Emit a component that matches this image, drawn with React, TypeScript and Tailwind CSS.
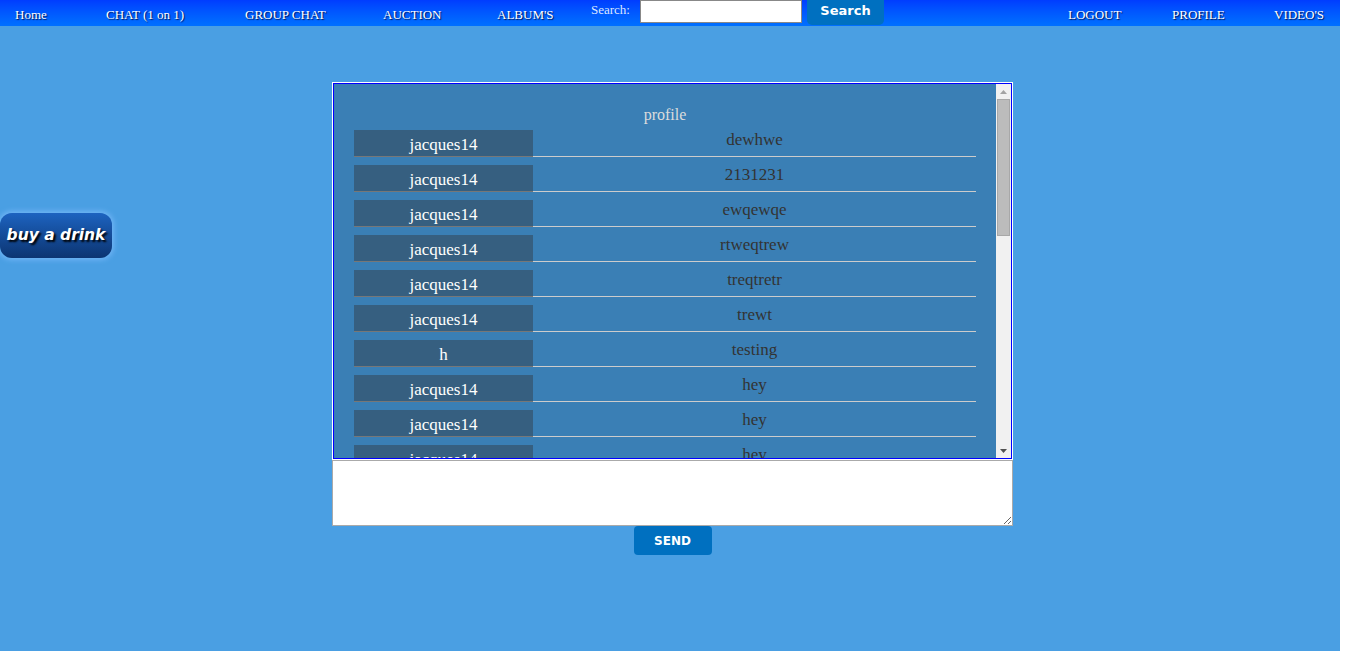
const navFont = { fontFamily: '"Liberation Serif", "DejaVu Serif", serif' };

const rows: [string, string][] = [
  ["jacques14", "dewhwe"],
  ["jacques14", "2131231"],
  ["jacques14", "ewqewqe"],
  ["jacques14", "rtweqtrew"],
  ["jacques14", "treqtretr"],
  ["jacques14", "trewt"],
  ["h", "testing"],
  ["jacques14", "hey"],
  ["jacques14", "hey"],
  ["jacques14", "hey"],
];

const NavLink = ({ label, w }: { label: string; w: string }) => (
  <a className={`${w} shrink-0 pt-[7px] text-[13px] leading-[16px] text-white [text-shadow:1px_1px_1px_#001a55]`}>{label}</a>
);

const ScrollBar = () => (
  <div className="flex w-[15px] shrink-0 flex-col items-center bg-[#f1f1f1]">
    <div className="flex h-[15px] w-full items-center justify-center">
      <svg width="7" height="4" viewBox="0 0 7 4">
        <path d="M0 4 L3.5 0 L7 4 Z" fill="#a3a3a3" />
      </svg>
    </div>
    <div className="h-[137px] w-[13px] border border-[#a8a8a8] bg-[#bcbcbc]" />
    <div className="flex-1" />
    <div className="flex h-[15px] w-full items-center justify-center">
      <svg width="7" height="4" viewBox="0 0 7 4">
        <path d="M0 0 L7 0 L3.5 4 Z" fill="#505050" />
      </svg>
    </div>
  </div>
);

const App = () => {
  return (
    <div className="flex min-h-[651px] w-[1354px] bg-white" style={navFont}>
      <div className="flex w-[1340px] flex-col bg-[#4a9fe3]">
        <div className="flex h-[26px] bg-gradient-to-b from-[#003cff] to-[#0070ff] pl-[15px]">
          <NavLink label="Home" w="w-[91px]" />
          <NavLink label="CHAT (1 on 1)" w="w-[139px]" />
          <NavLink label="GROUP CHAT" w="w-[138px]" />
          <NavLink label="AUCTION" w="w-[114px]" />
          <NavLink label="ALBUM'S" w="w-[94px]" />
          <span className="w-[49px] shrink-0 pt-[2px] text-[13px] leading-[16px] text-[#dde6ff]">Search:</span>
          <input className="h-[23px] w-[162px] border border-[#888] bg-white" />
          <button
            className="ml-[5px] h-[25px] w-[77px] rounded-b-[5px] bg-[#0070c0] pb-[4px] text-[13px] font-bold text-white"
            style={{ fontFamily: '"DejaVu Sans", Verdana, sans-serif' }}
          >
            Search
          </button>
          <div className="ml-[184px] flex">
            <NavLink label="LOGOUT" w="w-[104px]" />
            <NavLink label="PROFILE" w="w-[102px]" />
            <NavLink label="VIDEO'S" w="w-[60px]" />
          </div>
        </div>

        <div className="flex">
          <div className="w-[332px] shrink-0 pt-[187px]">
            <button
              className="h-[45px] w-[112px] rounded-[12px] bg-gradient-to-b from-[#1d63c0] to-[#0c3572] text-[15.5px] font-bold italic text-white shadow-[0_0_5px_2px_#6fb4f5] [text-shadow:2px_2px_2px_#000]"
              style={{ fontFamily: '"DejaVu Sans", Verdana, sans-serif' }}
            >
              buy a drink
            </button>
          </div>

          <div className="flex w-[681px] flex-col items-center pt-[56px]">
            <div className="w-[681px] border border-white">
              <div className="flex h-[376px] border border-[#0000ff] bg-[#3a7fb5]">
                <div className="flex-1 overflow-hidden">
                  <div className="pt-[22px] text-center text-[16px] leading-[18px] text-[#dcdcdc]">profile</div>
                  <div className="mt-[6px] ml-[20px] flex w-[622px] flex-col gap-[8px]">
                    {rows.map(([user, msg], i) => (
                      <div key={i} className="flex h-[27px] shrink-0">
                        <div className="flex w-[179px] items-center justify-center border-b border-[#777] bg-[#365f80] pt-[3px] text-[17px] leading-[20px] text-white">
                          {user}
                        </div>
                        <div className="flex flex-1 items-center justify-center border-b border-[#cccccc] pb-[6px] text-[17px] leading-[20px] text-[#333]">
                          {msg}
                        </div>
                      </div>
                    ))}
                  </div>
                </div>
                <ScrollBar />
              </div>
            </div>
            <textarea className="h-[66px] w-[681px] border border-[#aaa] bg-white" />
            <button
              className="h-[29px] w-[78px] rounded-[4px] bg-[#0070c0] text-[12px] font-bold text-white"
              style={{ fontFamily: '"DejaVu Sans", Verdana, sans-serif' }}
            >
              SEND
            </button>
          </div>
        </div>
      </div>
    </div>
  );
};

export default App;
